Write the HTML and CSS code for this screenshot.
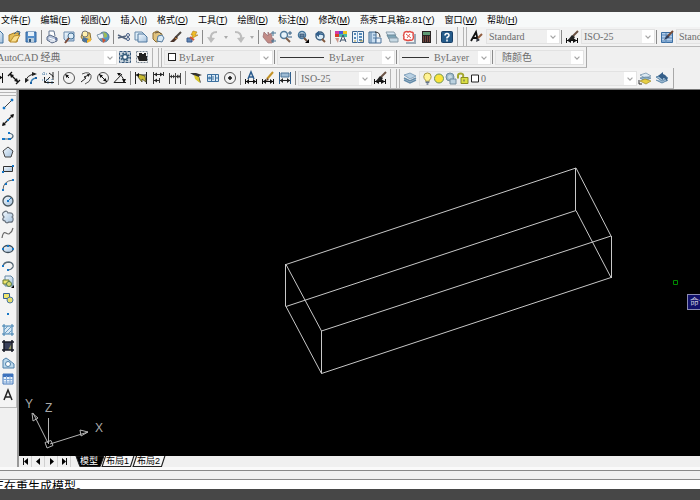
FILE: index.html
```html
<!DOCTYPE html>
<html lang="zh-CN">
<head>
<meta charset="utf-8">
<title>AutoCAD</title>
<link rel="stylesheet" href="styles.css">
</head>
<body>
<svg class="sprite" aria-hidden="true">
  <defs>
    <linearGradient id="pale" x1="0" y1="0" x2="1" y2="1"><stop offset="0" stop-color="#f4faff"/><stop offset="1" stop-color="#a3c0dc"/></linearGradient>
  </defs>
  <!-- standard toolbar -->
  <symbol id="new" viewBox="0 0 16 16"><path d="M5 2h6l3 3v9H5z" fill="url(#pale)" stroke="#42729f"/></symbol>
  <symbol id="open" viewBox="0 0 16 16"><path d="M3 6l5-2 5 0-2 9-8-1z" fill="#e3bd57" stroke="#a87b20"/><path d="M4 13l4-6 6-1-4 7z" fill="#f9df8e" stroke="#ba8b2b"/><path d="M8 5q3-4 5-2M11 2l3 1-1 3" fill="none" stroke="#366083"/></symbol>
  <symbol id="save" viewBox="0 0 16 16"><path d="M3 3h10v10H3z" fill="#568fca" stroke="#32659c"/><path d="M5 3h6v4H5z" fill="#e6f1fa"/><path d="M5 9h6v4H5z" fill="#b7cbdc"/><path d="M6 10h2v3H6z" fill="#315477"/></symbol>
  <symbol id="print" viewBox="0 0 16 16"><path d="M5 7V2h5l1 5" fill="#fff" stroke="#657692"/><path d="M3 8l3-2 7 3v3l-5 2-5-3z" fill="#b7c4da" stroke="#596985"/><path d="M5 9l6 2M6 12h5" stroke="#fff"/><circle cx="12" cy="10" r="1" fill="#586ba0"/></symbol>
  <symbol id="preview" viewBox="0 0 16 16"><path d="M3 3h10v9H5L3 10z" fill="url(#pale)" stroke="#6889ac"/><circle cx="10" cy="7" r="3" fill="#dcecf8" stroke="#467196"/><path d="M8 9l-4 5" stroke="#7b4937" stroke-width="2"/></symbol>
  <symbol id="publish" viewBox="0 0 16 16"><path d="M5 3l7 1 1 7-7 2-3-5z" fill="#e8cb73" stroke="#8e7336"/><circle cx="7" cy="5" r="3" fill="#fff0ae" stroke="#777"/><path d="M5 8l6 2-2 4-5-2z" fill="#4b729a"/><path d="M9 11l4-2v3l-4 2z" fill="#f4b72f"/></symbol>
  <symbol id="globe" viewBox="0 0 16 16"><circle cx="9" cy="8" r="5" fill="#569bc8" stroke="#547794"/><path d="M8 3q5 1 4 5l-3 1z" fill="#9dbd55"/><path d="M2 6l6-2 1 5-5 1z" fill="#edf4fb" stroke="#8399ad"/><path d="M7 9l4 2-3 3z" fill="#d5532e"/></symbol>
  <symbol id="cut" viewBox="0 0 16 16"><path d="M2 6l8 4M2 9l8-2" stroke="#54657e" stroke-width="1.5"/><circle cx="12" cy="6" r="1.5" fill="none" stroke="#425b85"/><circle cx="12" cy="10" r="1.5" fill="none" stroke="#425b85"/></symbol>
  <symbol id="copy" viewBox="0 0 16 16"><path d="M2 3h7l2 2v6H2z" fill="#dcecf7" stroke="#6688a9"/><path d="M5 5h6l3 3v5H5z" fill="url(#pale)" stroke="#50799f"/></symbol>
  <symbol id="paste" viewBox="0 0 16 16"><path d="M3 4l4-2 5 3-1 7-5 1-3-3z" fill="#e0c27d" stroke="#8b6c33"/><path d="M5 4l4-1 2 2" fill="none" stroke="#675741"/><path d="M8 7l4-1 2 3-2 4-5-1z" fill="#d8e9f6" stroke="#53799d"/></symbol>
  <symbol id="brush" viewBox="0 0 16 16"><path d="M14 3L8 9" stroke="#4d4743" stroke-width="2"/><path d="M9 7l2 2-4 4-4 0 3-3z" fill="#49332a"/><path d="M8 9l2 1" stroke="#d9964b"/></symbol>
  <symbol id="match" viewBox="0 0 16 16"><path d="M9 2l4 1-2 3h3L7 10l2-4H7z" fill="#f1bd24" stroke="#a77a21" stroke-width=".6"/><path d="M3 9h5v4H3z" fill="#6187b6" stroke="#3a5a8b"/><path d="M6 8l4 3" stroke="#d45535" stroke-width="2"/></symbol>
  <symbol id="undo" viewBox="0 0 16 16"><path d="M12 3Q5 3 6 10" fill="none" stroke="#bdbdbd" stroke-width="2"/><path d="M2 8l4 6 4-5z" fill="#bdbdbd"/></symbol>
  <symbol id="redo" viewBox="0 0 16 16"><path d="M4 3q7 0 6 7" fill="none" stroke="#bdbdbd" stroke-width="2"/><path d="M6 9l4 5 4-6z" fill="#bdbdbd"/></symbol>
  <symbol id="caret" viewBox="0 0 8 16"><path d="M2 7h4l-2 3z" fill="#aaa"/></symbol>
  <symbol id="pan" viewBox="0 0 16 16"><path d="M3 3l4 4 0-4 2 3 1-2 1 5 2 1-2 4H7L2 8z" fill="#c28b86" stroke="#966b70" stroke-width=".7"/><path d="M12 2v5M10 4h5M12 10v4M10 12h5" stroke="#447292"/></symbol>
  <symbol id="zoompm" viewBox="0 0 16 16"><circle cx="6" cy="6" r="3.5" fill="#e7f3fb" stroke="#527b9b" stroke-width="1.5"/><path d="M8 9l4 4" stroke="#80604d" stroke-width="2"/><path d="M10 4h4M12 2v4M10 8h4" stroke="#335e84"/></symbol>
  <symbol id="zoomwin" viewBox="0 0 16 16"><circle cx="7" cy="6" r="3.5" fill="#e7f3fb" stroke="#44759c" stroke-width="1.5"/><path d="M5 5h4v3H5z" fill="#6c87a4" stroke="#345777"/><path d="M9 9l3 3" stroke="#735441" stroke-width="2"/><path d="M14 10v4h-4z" fill="#000"/></symbol>
  <symbol id="zoomprev" viewBox="0 0 16 16"><circle cx="8" cy="7" r="4" fill="#d8ebf8" stroke="#3c5f7e" stroke-width="1.5"/><path d="M3 5l4-3v2q5 0 5 3-3-2-5-1v2z" fill="#315f8c"/><path d="M10 10l3 3" stroke="#82593d" stroke-width="2"/></symbol>
  <symbol id="props" viewBox="0 0 16 16"><path d="M2 2h4v3H2z" fill="#d43ba5"/><path d="M6 2h4v3H6z" fill="#4a58e0"/><path d="M10 2h4v3h-4z" fill="#f0c421"/><path d="M2 5h4v3H2z" fill="#db3e26"/><path d="M6 5h8v3H6z" fill="#49b9a4"/><path d="M7 13l3-7 3 7M8 11h5" fill="none" stroke="#3f526b"/><path d="M2 9l3 5 1-5z" fill="#cc968a"/></symbol>
  <symbol id="center" viewBox="0 0 16 16"><path d="M2.500 2.500h11v11h-11z" fill="#eef5fa" stroke="#3c648f"/><path d="M4 4h2v2H4zm0 4h2v2H4zm5-4h3v2H9zm0 3h3v2H9zm0 3h3v2H9z" fill="#568ab9"/><path d="M7.500 2v12" stroke="#79a2ca"/><path d="M4 12h2M10 12h3" stroke="#b2983d"/></symbol>
  <symbol id="palettes" viewBox="0 0 16 16"><path d="M2 3h7v11H2z" fill="#c7ddf0" stroke="#3f6890"/><path d="M4 3v11M6 6h3M6 9h3" stroke="#547ca4"/><path d="M8 3q5 0 5 5" fill="none" stroke="#333"/><path d="M9 9h5v5H9z" fill="#eaf3fa" stroke="#4a719a"/></symbol>
  <symbol id="sheets" viewBox="0 0 16 16"><path d="M2 3l8 0 2 3-8 1z" fill="#d9e8f3" stroke="#8d9eab"/><path d="M3 6l8 0 2 3-8 1z" fill="#7fa5b8" stroke="#6a8998"/><path d="M5 9h9v4H6z" fill="#c7d9e4" stroke="#879aa7"/></symbol>
  <symbol id="markup" viewBox="0 0 16 16"><path d="M5 14h9V5" fill="none" stroke="#9aa9b7" stroke-width="2"/><path d="M4 3q2-1 3 0 2-1 3 0 3 0 2 3 1 2 0 4-1 2-3 1-2 1-4 0-3 0-2-3-1-2 0-3 0-2 1-2z" fill="#fff" stroke="#e14c45" stroke-width="1.500"/><path d="M5 5l5 4M9 5L6 9" stroke="#e05a50"/></symbol>
  <symbol id="calc" viewBox="0 0 16 16"><path d="M4 2h9v12H4z" fill="#292424"/><path d="M5 3h7v3H5z" fill="#5f9a74"/><path d="M5 8h7M5 10h7M5 12h7" stroke="#c36757" stroke-dasharray="1 1"/></symbol>
  <symbol id="help" viewBox="0 0 16 16"><rect x="2.500" y="2.500" width="11" height="11" rx="1" fill="#255b8a" stroke="#183f67"/><path d="M6 6.500q0-2 2-2t2 2Q10 7.500 8 8.500v1M8 10.500v2" fill="none" stroke="#fff" stroke-width="1.500"/></symbol>
  <symbol id="textstyle" viewBox="0 0 16 16"><path d="M2 12L7 3l2 9M4 9h5" fill="none" stroke="#111" stroke-width="1.8"/><path d="M13 5L9 9" stroke="#905c3d" stroke-width="2"/><path d="M7 13l1-4 3 2z" fill="#343945"/></symbol>
  <symbol id="dimstyle" viewBox="0 0 16 16"><path d="M2.500 9v5M13.500 9v5M3 11.500h10" stroke="#111"/><path d="M3 11.500L7 9v5zM13 11.500L9 9v5z" fill="#111"/><path d="M14 2L9 7" stroke="#6b5345" stroke-width="2"/><path d="M4 11l4-5 3 2-2 3z" fill="#222"/></symbol>
  <symbol id="tablestyle" viewBox="0 0 16 16"><path d="M2.500 3.500h11v10h-11z" fill="#b5cdea" stroke="#3b6ea3"/><path d="M3 6h10M3 9h10M3 12h10M7 4v10" stroke="#5688b9"/><path d="M14 2L9 7" stroke="#764b36" stroke-width="2"/><path d="M5 11l3-5 3 2z" fill="#333e59"/></symbol>
  <!-- workspace and dimension toolbars -->
  <symbol id="gear" viewBox="0 0 16 16"><rect x="2.500" y="2.500" width="11" height="11" fill="#c8d3dc" stroke="#34577c" stroke-dasharray="3 1"/><circle cx="8" cy="8" r="2.500" fill="#fff" stroke="#365c7b" stroke-width="1.500"/><circle cx="8" cy="8" r="4" fill="none" stroke="#365c7b" stroke-width="1.500" stroke-dasharray="1.570 1.570"/></symbol>
  <symbol id="lockui" viewBox="0 0 16 16"><path d="M2.500 2.500h11v11h-11z" fill="none" stroke="#788693" stroke-dasharray="2 1"/><path d="M3 7h2V4h3v1h2V4h2v3h1v5H5z" fill="#222"/></symbol>
  <symbol id="d-linear" viewBox="0 0 16 16"><path d="M3.500 3v10M13.500 3v10M4 7.500h9" stroke="#111"/><path d="M4 7.500L7 5v5zM13.500 7.500L10 5v5z" fill="#111"/></symbol>
  <symbol id="d-aligned" viewBox="0 0 16 16"><path d="M2 6l4-4M10 14l4-4M4 4l8 8" stroke="#111" stroke-width="1.300"/><path d="M4 4l4 1-3 3zM12 12l-4-1 3-3z" fill="#111"/></symbol>
  <symbol id="d-arc" viewBox="0 0 16 16"><path d="M3 12Q3 5 12 4" fill="none" stroke="#222"/><path d="M2 13V8l4 2zM14 4l-5-2v4z" fill="#222"/><path d="M8 13q0-4 5-5" fill="none" stroke="#3d81b6" stroke-width="1.500"/><path d="M7 12h2v2H7zM12 7h2v2h-2z" fill="#1c62a5"/></symbol>
  <symbol id="d-ord" viewBox="0 0 16 16"><path d="M4.500 7v5.500H14M5 12l5-5" fill="none" stroke="#222"/><path d="M9 3l4 3v4M13 2v5" fill="none" stroke="#222"/><path d="M2 4h6M2 10h6M4 2v3M8 9v5M12 9v5" stroke="#477ca8" stroke-dasharray="1 1"/></symbol>
  <symbol id="d-rad" viewBox="0 0 16 16"><circle cx="8" cy="8" r="5.500" fill="none" stroke="#555"/><path d="M8 8L5 5" stroke="#111"/><path d="M4 4l4 1.500L5.500 8z" fill="#111"/></symbol>
  <symbol id="d-jog" viewBox="0 0 16 16"><path d="M4 4q4-2 7-1 3 2 2 5-1 4-6 6" fill="none" stroke="#555"/><path d="M3 12l5-4-2-1 5-2" fill="none" stroke="#222"/><path d="M12 4L9 4l1.500 3z" fill="#222"/></symbol>
  <symbol id="d-dia" viewBox="0 0 16 16"><circle cx="8" cy="8" r="5.500" fill="none" stroke="#555"/><path d="M4 4l8 8" stroke="#111"/><path d="M4 4l4 1.500L5.500 8zM12 12l-4-1.500L10.500 8z" fill="#111"/></symbol>
  <symbol id="d-ang" viewBox="0 0 16 16"><path d="M10 4L2 12.500h12M6 4q5 1 6 8" fill="none" stroke="#222"/><path d="M5 3l4 0-2 3zM10 9h4l-2 4z" fill="#111"/></symbol>
  <symbol id="d-quick" viewBox="0 0 16 16"><path d="M2.500 2v12M13.500 2v12M3 5h10" stroke="#222"/><path d="M5 4l7 2 1 6-4-3 0 3-4-5z" fill="#c9bb30" stroke="#4d4a22" stroke-width=".8"/><path d="M3 5l3-2v4z" fill="#111"/></symbol>
  <symbol id="d-base" viewBox="0 0 16 16"><path d="M3.500 2v12M13.500 2v4M9.500 8v5M3 4.500h10M3 10.500h6" stroke="#333"/><path d="M4 4.500l3-2v4zM13 4.500l-3-2v4zM4 10.500l3-2v4z" fill="#222"/></symbol>
  <symbol id="d-cont" viewBox="0 0 16 16"><path d="M2.500 3v11M8.500 3v11M13.500 3v11M2 6.500h12" stroke="#444"/><path d="M3 6.500l2-2v4zM13.500 6.500l-2-2v4zM8 6.500l-2-2v4zM9 6.500l2-2v4z" fill="#333"/></symbol>
  <symbol id="d-leader" viewBox="0 0 16 16"><path d="M2 3l6 0 6 2-3 1 2 7-5-4-1-3z" fill="#333"/><path d="M6 5l5 2 1 6-5-4z" fill="#d9c82e"/></symbol>
  <symbol id="d-tol" viewBox="0 0 16 16"><path d="M2.500 4.500h11v7h-11zM6.500 4v8M10.500 4v8M10 8h4" fill="#d8e8f5" stroke="#3c709f"/><circle cx="4.500" cy="8" r="1.500" fill="#4d83b1"/><path d="M7 7h2M7 9h2" stroke="#3c709f"/></symbol>
  <symbol id="d-center" viewBox="0 0 16 16"><circle cx="8" cy="8" r="5.500" fill="none" stroke="#555"/><path d="M8 6v4M6 8h4" stroke="#111" stroke-width="1.500"/></symbol>
  <symbol id="d-text" viewBox="0 0 16 16"><path d="M5 9l3-7 3 7M6 7h5" fill="none" stroke="#2c5c8d" stroke-width="1.500"/><path d="M2.500 9v5M13.500 9v5M3 11.500h10" stroke="#111"/><path d="M3 11.500L6 9v5zM13 11.500L10 9v5z" fill="#111"/></symbol>
  <symbol id="d-edit" viewBox="0 0 16 16"><path d="M2.500 9v5M13.500 9v5M3 11.500h10" stroke="#111"/><path d="M3 11.500L6 9v5zM13 11.500L10 9v5z" fill="#111"/><path d="M13 2L7 9" stroke="#c39226" stroke-width="2"/><path d="M7 8l-1 3 3-1z" fill="#60402d"/></symbol>
  <symbol id="d-update" viewBox="0 0 16 16"><path d="M2.500 2v12M13.500 2v12" stroke="#305f8d"/><path d="M4 3h8v4H4z" fill="#9ebbd4" stroke="#4d7498"/><path d="M3 10.500h10" stroke="#222"/><path d="M3 10.500L6 8v5zM13 10.500L10 8v5z" fill="#222"/></symbol>
  <!-- layers -->
  <symbol id="layers" viewBox="0 0 16 16"><path d="M2 5l6-2 6 3-6 3z" fill="#b8d0e2" stroke="#648aa9" stroke-width=".7"/><path d="M2 8l6 3 6-3M2 10l6 3 6-3" fill="none" stroke="#668dab" stroke-width="1.500"/></symbol>
  <symbol id="bulb" viewBox="1 1 13 14"><path d="M8 2q-4 0-4 4 0 2 2 4v1h4v-1q2-2 2-4 0-4-4-4z" fill="#fff394" stroke="#a29135"/><path d="M6 12h4M7 14h2" stroke="#65758b" stroke-width="1.500"/></symbol>
  <symbol id="sun" viewBox="2 2 12 12"><circle cx="8" cy="8" r="4.500" fill="#f9e33a" stroke="#6d955c"/></symbol>
  <symbol id="freeze" viewBox="2 2 12 13"><circle cx="7" cy="7" r="4" fill="#9eb9c8" stroke="#708da0"/><circle cx="7" cy="7" r="2" fill="#c6d9e2"/><path d="M7 9h6v5H7z" fill="#bbd1df" stroke="#728c9e"/></symbol>
  <symbol id="unlock" viewBox="2 2 12 12"><path d="M3 8V5q0-2 3-2t2 4" fill="none" stroke="#a5a830" stroke-width="2"/><path d="M6 7h7v6H6z" fill="#dbe044" stroke="#8b8d24"/><path d="M9 9v2" stroke="#555"/></symbol>
  <symbol id="swatch" viewBox="2 2 12 12"><path d="M4.500 4.500h7v7h-7z" fill="#fff" stroke="#222"/></symbol>
  <symbol id="lay-cur" viewBox="0 0 16 16"><path d="M3 5l6-2 5 3-6 2z" fill="#dbe9f2" stroke="#688aa5" stroke-width=".7"/><path d="M3 8l5 3 6-3-5-1z" fill="#8db0c9" stroke="#557b99" stroke-width=".7"/><path d="M3 11l5-2 6 2-5 3z" fill="#e7cf44" stroke="#a08b28" stroke-width=".7"/><path d="M2 10v4h3" fill="none" stroke="#333"/></symbol>
  <symbol id="lay-prev" viewBox="0 0 16 16"><path d="M2 7l6-2 6 3-6 3zM2 10l6 3 6-3" fill="#a5c1d7" stroke="#5d86a8"/><path d="M4 6l5-4v2q5 1 4 8-1-4-4-4v2z" fill="#355f89"/></symbol>
  <!-- draw toolbar -->
  <symbol id="line" viewBox="0 0 16 16"><path d="M4 12l8-8" stroke="#444"/><path d="M3 11h2v2H3zM11 3h2v2h-2z" fill="#1676c5" stroke="#1676c5" stroke-width=".5"/></symbol>
  <symbol id="xline" viewBox="0 0 16 16"><path d="M3 13L13 3" stroke="#222" stroke-width="1.300"/><path d="M2 14l1-4 3 3zM14 2l-4 1 3 3z" fill="#111"/><path d="M7 7h2v2H7z" fill="#1676c5"/></symbol>
  <symbol id="pline" viewBox="0 0 16 16"><path d="M3 11h7q3-1 3-3t-4-3" fill="none" stroke="#4b6679" stroke-width="1.200"/><path d="M2 10h3v2H2zM8 10h3v2H8zM8 4h2v2H8z" fill="#1676c5"/></symbol>
  <symbol id="polygon" viewBox="0 0 16 16"><path d="M8 3l5 4-2 6H5L3 7z" fill="url(#pale)" stroke="#444"/></symbol>
  <symbol id="rect" viewBox="0 0 16 16"><path d="M3.500 5.500h9v5h-9z" fill="url(#pale)" stroke="#333"/><path d="M2 10h2v2H2zM12 4h2v2h-2z" fill="#1676c5"/></symbol>
  <symbol id="arc" viewBox="0 0 16 16"><path d="M3 13q0-9 10-10" fill="none" stroke="#666"/><path d="M2 12h2v2H2zM5 6h2v2H5zM12 2h2v2h-2z" fill="#1676c5"/></symbol>
  <symbol id="circle" viewBox="0 0 16 16"><circle cx="8" cy="8" r="5" fill="url(#pale)" stroke="#47555d" stroke-width="1.300"/><path d="M8 8l3-3" stroke="#1676c5"/><path d="M7 7h2v2H7z" fill="#1676c5"/></symbol>
  <symbol id="cloud" viewBox="0 0 16 16"><path d="M4 8Q1 5 4 3q3-2 4 1 5-1 5 3-2 1 0 2 1 5-4 4-3 2-4-1Q1 11 4 8z" fill="url(#pale)" stroke="#67717c" stroke-width="1.200"/></symbol>
  <symbol id="spline" viewBox="0 0 16 16"><path d="M2 13q1-7 4-5t4 0q2-1 3-5" fill="none" stroke="#666" stroke-width="1.200"/></symbol>
  <symbol id="ellipse" viewBox="0 0 16 16"><ellipse cx="8" cy="8" rx="5" ry="3.500" fill="url(#pale)" stroke="#3e4d58" stroke-width="1.300"/><path d="M2 7h2v2H2zM12 7h2v2h-2zM7 4h2v2H7z" fill="#1676c5"/></symbol>
  <symbol id="earc" viewBox="0 0 16 16"><path d="M3 8q1-4 6-4 5 1 4 5-2 3-5 3" fill="none" stroke="#596b77" stroke-width="1.300"/><path d="M2 7h2v2H2zM7 11h2v2H7z" fill="#1676c5"/></symbol>
  <symbol id="insblock" viewBox="0 0 16 16"><path d="M5 2h6l2 2v8H5z" fill="url(#pale)" stroke="#6387a2"/><path d="M3 6h6v4H3z" fill="#eee46c" stroke="#68792f"/><circle cx="9" cy="10" r="2.500" fill="#d8d86f" stroke="#52794b"/><path d="M14 11v3h-3z" fill="#000"/></symbol>
  <symbol id="mkblock" viewBox="0 0 16 16"><path d="M3.500 3.500h6v5h-6z" fill="#eee46c" stroke="#345e90"/><circle cx="10" cy="10" r="3" fill="#e5dc6b" stroke="#49779f"/></symbol>
  <symbol id="point" viewBox="0 0 16 16"><path d="M7 7h2v2H7z" fill="#1676c5"/></symbol>
  <symbol id="hatch" viewBox="0 0 16 16"><path d="M4 4h8v8H4z" fill="#d8e8f4"/><path d="M4 2v12M12 2v12M2 4h12M2 12h12" stroke="#397cae"/><path d="M4 8l4-4M4 12l8-8M8 12l4-4" stroke="#6c9dc5"/></symbol>
  <symbol id="gradient" viewBox="0 0 16 16"><path d="M4 4h8v8H4z" fill="#39405a"/><path d="M8 12l4-7v7z" fill="#9a9864"/><path d="M4 2v12M12 2v12M2 4h12M2 12h12" stroke="#171a26" stroke-width="1.500"/></symbol>
  <symbol id="region" viewBox="0 0 16 16"><path d="M3 13V5l3-2 3 2 5 4v4z" fill="#bdd9ec" stroke="#4c7fa9"/><circle cx="8" cy="9" r="2.500" fill="#fff" stroke="#4c7fa9"/></symbol>
  <symbol id="table" viewBox="0 0 16 16"><path d="M3 3h10v10H3z" fill="#e9f2fb" stroke="#4277b8"/><path d="M3 3h10v3H3z" fill="#3d72bd"/><path d="M3 8.500h10M3 11h10M6.500 5v8M10 5v8" stroke="#81a8d6"/></symbol>
  <symbol id="mtext" viewBox="0 0 16 16"><path d="M4 13L8 3l4 10M5 10h6" fill="none" stroke="#222" stroke-width="1.500"/></symbol>
  <symbol id="chevron" viewBox="0 0 12 16"><path d="M3 7l3 3 3-3" fill="none" stroke="#a5a5a5" stroke-width="1.500"/></symbol>
</svg>

<div class="frame frame-top"></div>

<nav class="menubar">
  <button>文件(<u>F</u>)</button><button>编辑(<u>E</u>)</button><button>视图(<u>V</u>)</button><button>插入(<u>I</u>)</button><button>格式(<u>O</u>)</button><button>工具(<u>T</u>)</button><button>绘图(<u>D</u>)</button><button>标注(<u>N</u>)</button><button>修改(<u>M</u>)</button><button>燕秀工具箱2.81(<u>Y</u>)</button><button>窗口(<u>W</u>)</button><button>帮助(<u>H</u>)</button>
</nav>

<div class="dock">
  <div class="bar bar-full">
    <button class="tool first" aria-label="新建"><svg><use href="#new"/></svg></button>
    <button class="tool" aria-label="打开"><svg><use href="#open"/></svg></button>
    <button class="tool" aria-label="保存"><svg><use href="#save"/></svg></button>
    <i class="sep"></i>
    <button class="tool" aria-label="打印"><svg><use href="#print"/></svg></button>
    <button class="tool" aria-label="打印预览"><svg><use href="#preview"/></svg></button>
    <button class="tool" aria-label="发布"><svg><use href="#publish"/></svg></button>
    <button class="tool" aria-label="三维"><svg><use href="#globe"/></svg></button>
    <i class="sep"></i>
    <button class="tool" aria-label="剪切"><svg><use href="#cut"/></svg></button>
    <button class="tool" aria-label="复制"><svg><use href="#copy"/></svg></button>
    <button class="tool" aria-label="粘贴"><svg><use href="#paste"/></svg></button>
    <button class="tool" aria-label="特性匹配"><svg><use href="#brush"/></svg></button>
    <button class="tool" aria-label="块编辑器"><svg><use href="#match"/></svg></button>
    <i class="sep"></i>
    <button class="tool" aria-label="放弃"><svg><use href="#undo"/></svg></button>
    <button class="tool drop" aria-label="放弃列表"><svg><use href="#caret"/></svg></button>
    <button class="tool" aria-label="重做"><svg><use href="#redo"/></svg></button>
    <button class="tool drop" aria-label="重做列表"><svg><use href="#caret"/></svg></button>
    <i class="sep"></i>
    <button class="tool" aria-label="平移"><svg><use href="#pan"/></svg></button>
    <button class="tool" aria-label="实时缩放"><svg><use href="#zoompm"/></svg></button>
    <button class="tool" aria-label="窗口缩放"><svg><use href="#zoomwin"/></svg></button>
    <button class="tool" aria-label="缩放上一个"><svg><use href="#zoomprev"/></svg></button>
    <i class="sep"></i>
    <button class="tool" aria-label="特性"><svg><use href="#props"/></svg></button>
    <button class="tool" aria-label="设计中心"><svg><use href="#center"/></svg></button>
    <button class="tool" aria-label="工具选项板"><svg><use href="#palettes"/></svg></button>
    <button class="tool" aria-label="图纸集"><svg><use href="#sheets"/></svg></button>
    <button class="tool" aria-label="标记集"><svg><use href="#markup"/></svg></button>
    <button class="tool" aria-label="计算器"><svg><use href="#calc"/></svg></button>
    <i class="sep"></i>
    <button class="tool" aria-label="帮助"><svg><use href="#help"/></svg></button>
    <i class="grip"></i>
    <button class="tool" aria-label="文字样式"><svg><use href="#textstyle"/></svg></button>
    <label class="combo w-style"><select aria-label="文字样式"><option>Standard</option></select><svg><use href="#chevron"/></svg></label>
    <i class="sep"></i>
    <button class="tool" aria-label="标注样式"><svg><use href="#dimstyle"/></svg></button>
    <label class="combo w-style"><select aria-label="标注样式"><option>ISO-25</option></select><svg><use href="#chevron"/></svg></label>
    <i class="sep"></i>
    <button class="tool" aria-label="表格样式"><svg><use href="#tablestyle"/></svg></button>
    <label class="combo w-style"><select aria-label="表格样式"><option>Standard</option></select><svg><use href="#chevron"/></svg></label>
  </div>

  <div class="bar">
    <label class="combo w-space"><select aria-label="工作空间"><option>AutoCAD 经典</option></select><svg><use href="#chevron"/></svg></label>
    <button class="tool" aria-label="工作空间设置"><svg><use href="#gear"/></svg></button>
    <button class="tool" aria-label="我的工作空间"><svg><use href="#lockui"/></svg></button>
    <i class="grip"></i>
    <label class="combo w-color"><span class="chip"></span><select aria-label="颜色"><option>ByLayer</option></select><svg><use href="#chevron"/></svg></label>
    <i class="sep"></i>
    <label class="combo w-ltype"><span class="rule"></span><select aria-label="线型"><option>ByLayer</option></select><svg><use href="#chevron"/></svg></label>
    <i class="sep"></i>
    <label class="combo w-weight"><span class="rule rule-short"></span><select aria-label="线宽"><option>ByLayer</option></select><svg><use href="#chevron"/></svg></label>
    <i class="sep"></i>
    <label class="combo w-plot"><select aria-label="打印样式"><option>随颜色</option></select><svg><use href="#chevron"/></svg></label>
  </div>

  <div class="bar">
    <button class="tool first" aria-label="线性"><svg><use href="#d-linear"/></svg></button>
    <button class="tool" aria-label="对齐"><svg><use href="#d-aligned"/></svg></button>
    <button class="tool" aria-label="弧长"><svg><use href="#d-arc"/></svg></button>
    <button class="tool" aria-label="坐标"><svg><use href="#d-ord"/></svg></button>
    <i class="sep"></i>
    <button class="tool" aria-label="半径"><svg><use href="#d-rad"/></svg></button>
    <button class="tool" aria-label="折弯"><svg><use href="#d-jog"/></svg></button>
    <button class="tool" aria-label="直径"><svg><use href="#d-dia"/></svg></button>
    <button class="tool" aria-label="角度"><svg><use href="#d-ang"/></svg></button>
    <i class="sep"></i>
    <button class="tool" aria-label="快速标注"><svg><use href="#d-quick"/></svg></button>
    <button class="tool" aria-label="基线"><svg><use href="#d-base"/></svg></button>
    <button class="tool" aria-label="连续"><svg><use href="#d-cont"/></svg></button>
    <i class="sep"></i>
    <button class="tool" aria-label="引线"><svg><use href="#d-leader"/></svg></button>
    <button class="tool" aria-label="公差"><svg><use href="#d-tol"/></svg></button>
    <button class="tool" aria-label="圆心标记"><svg><use href="#d-center"/></svg></button>
    <i class="sep"></i>
    <button class="tool" aria-label="编辑标注"><svg><use href="#d-text"/></svg></button>
    <button class="tool" aria-label="编辑标注文字"><svg><use href="#d-edit"/></svg></button>
    <button class="tool" aria-label="标注更新"><svg><use href="#d-update"/></svg></button>
    <i class="sep"></i>
    <label class="combo w-style"><select aria-label="当前标注样式"><option>ISO-25</option></select><svg><use href="#chevron"/></svg></label>
    <button class="tool" aria-label="标注样式管理"><svg><use href="#dimstyle"/></svg></button>
    <i class="grip"></i>
    <button class="tool" aria-label="图层特性"><svg><use href="#layers"/></svg></button>
    <label class="combo w-layer"><span class="states"><svg><use href="#bulb"/></svg><svg><use href="#sun"/></svg><svg><use href="#freeze"/></svg><svg><use href="#unlock"/></svg><svg><use href="#swatch"/></svg></span><select aria-label="图层"><option>0</option></select><svg><use href="#chevron"/></svg></label>
    <button class="tool" aria-label="置为当前图层"><svg><use href="#lay-cur"/></svg></button>
    <button class="tool" aria-label="上一个图层"><svg><use href="#lay-prev"/></svg></button>
  </div>
</div>

<main class="work">
  <aside class="side">
    <div class="draw">
      <i class="grip-h"></i>
      <div class="draw-tools">
        <button class="tool" aria-label="直线"><svg><use href="#line"/></svg></button>
        <button class="tool" aria-label="构造线"><svg><use href="#xline"/></svg></button>
        <button class="tool" aria-label="多段线"><svg><use href="#pline"/></svg></button>
        <button class="tool" aria-label="正多边形"><svg><use href="#polygon"/></svg></button>
        <button class="tool" aria-label="矩形"><svg><use href="#rect"/></svg></button>
        <button class="tool" aria-label="圆弧"><svg><use href="#arc"/></svg></button>
        <button class="tool" aria-label="圆"><svg><use href="#circle"/></svg></button>
        <button class="tool" aria-label="修订云线"><svg><use href="#cloud"/></svg></button>
        <button class="tool" aria-label="样条曲线"><svg><use href="#spline"/></svg></button>
        <button class="tool" aria-label="椭圆"><svg><use href="#ellipse"/></svg></button>
        <button class="tool" aria-label="椭圆弧"><svg><use href="#earc"/></svg></button>
        <button class="tool" aria-label="插入块"><svg><use href="#insblock"/></svg></button>
        <button class="tool" aria-label="创建块"><svg><use href="#mkblock"/></svg></button>
        <button class="tool" aria-label="点"><svg><use href="#point"/></svg></button>
        <button class="tool" aria-label="图案填充"><svg><use href="#hatch"/></svg></button>
        <button class="tool" aria-label="渐变色"><svg><use href="#gradient"/></svg></button>
        <button class="tool" aria-label="面域"><svg><use href="#region"/></svg></button>
        <button class="tool" aria-label="表格"><svg><use href="#table"/></svg></button>
        <button class="tool" aria-label="多行文字"><svg><use href="#mtext"/></svg></button>
      </div>
    </div>
  </aside>
  <section class="view">
    <div class="canvas">
      <svg class="model">
        <g transform="translate(-19 -90)">
          <path class="edge" d="M286 264.500L576 168l35 68-289.500 95zM286 306.500L576 210.500l35 67L321.500 373.500zM285.500 264v42.500M575.500 168v42.500M611.500 236v42M321.500 331v42.500"/>
          <path class="axis" d="M48.500 418v26M50 444l38-12M48 443L33 413M80 430l8 2-7 4zM32 413l6 5-5 3z"/>
          <path class="axis" d="M45 442.500l6-2 2 5-6 2.500z"/>
          <path class="cursor" d="M673.500 280.500h4v4h-4z"/>
          <text class="ucs" x="25" y="408">Y</text>
          <text class="ucs" x="45" y="412">Z</text>
          <text class="ucs" x="95" y="432">X</text>
        </g>
      </svg>
      <span class="prompt">命令:</span>
    </div>
    <div class="tabs">
      <button class="nav" aria-label="第一个"><svg viewBox="0 0 13 11"><path d="M4.500 2v7" stroke="#111"/><path d="M9 2v7L5 5.500z"/></svg></button>
      <button class="nav" aria-label="上一个"><svg viewBox="0 0 13 11"><path d="M8 2v7L4 5.500z"/></svg></button>
      <button class="nav" aria-label="下一个"><svg viewBox="0 0 13 11"><path d="M5 2v7l4-3.500z"/></svg></button>
      <button class="nav" aria-label="最后一个"><svg viewBox="0 0 13 11"><path d="M4 2v7l4-3.500z"/><path d="M8.500 2v7" stroke="#111"/></svg></button>
      <button class="tab on"><svg viewBox="0 0 30 11" preserveAspectRatio="none"><path d="M1 0l4 10.500h21L30 0z"/></svg><span>模型</span></button>
      <button class="tab"><svg viewBox="0 0 30 11" preserveAspectRatio="none"><path d="M4 0L1 10.500h25L29 0"/></svg><span>布局1</span></button>
      <button class="tab"><svg viewBox="0 0 30 11" preserveAspectRatio="none"><path d="M4 0L1 10.500h25L29 0"/></svg><span>布局2</span></button>
    </div>
  </section>
</main>

<div class="splitter"></div>
<div class="command"><output>正在重生成模型。</output></div>
<div class="frame frame-bottom"></div>
</body>
</html>
```
FILE: styles.css
```css
* { box-sizing: border-box; }

body {
  margin: 0;
  height: 100vh;
  display: flex;
  flex-direction: column;
  overflow: hidden;
  background: #f0f0f0;
  color: #000;
  font: 9px/14px "Liberation Sans", "Noto Sans CJK SC", sans-serif;
}

.sprite { position: absolute; width: 0; height: 0; }

button {
  margin: 0;
  padding: 0;
  border: 0;
  background: none;
  color: inherit;
  font: inherit;
}

.frame { flex: none; background: #474747; }
.frame-top { height: 12px; }
.frame-bottom { height: 11px; }

/* menus */
.menubar {
  flex: none;
  display: flex;
  gap: 10px;
  height: 15px;
  padding-left: 1px;
  background: #f7f9f9;
  white-space: nowrap;
}
.menubar u { text-underline-offset: 1px; }

/* docked toolbars */
.dock {
  flex: none;
  display: flex;
  flex-direction: column;
  align-items: flex-start;
  border-bottom: 1px solid #777;
}
.bar {
  display: flex;
  align-items: center;
  height: 21px;
  padding-right: 2px;
  border-right: 1px solid #a8a8a8;
  border-bottom: 1px solid #b8b8b8;
  background: #f2f2f2;
  white-space: nowrap;
}
.bar-full { overflow: hidden; width: 100%; height: 20px; padding-right: 0; border-right: 0; }
.tool {
  flex: none;
  display: block;
  width: 17px;
  height: 16px;
}
.tool svg { display: block; width: 16px; height: 16px; }
.tool.first { margin-left: -11px; }
.tool.drop { width: 9px; }
.tool.drop svg { width: 8px; }
.sep {
  flex: none;
  width: 1px;
  height: 14px;
  margin: 0 2px 0 1px;
  background: #8a8a8a;
}
.grip {
  flex: none;
  width: 10px;
  height: 19px;
  margin: 0 2px 0 1px;
  border: solid #b5b5b5;
  border-width: 0 1px;
  background: linear-gradient(90deg, transparent 5px, #b5b5b5 5px, #b5b5b5 6px, transparent 6px);
}

/* drop-down lists */
.combo {
  position: relative;
  flex: none;
  display: flex;
  align-items: center;
  height: 15px;
  border: 1px solid #e2e2e2;
  background: #efefef;
}
.combo select {
  appearance: none;
  flex: 1;
  min-width: 0;
  height: 13px;
  margin: 0;
  padding: 0 0 0 2px;
  border: 0;
  background: none;
  color: #6c6c6c;
  font: 10px/13px "Liberation Serif", "Noto Sans CJK SC", serif;
}
.combo > svg { flex: none; width: 12px; height: 13px; background: #fff; }
.w-style { width: 74px; }
.w-space { width: 121px; margin-left: -4px; }
.w-space select { padding-left: 0; }
.w-color { width: 109px; }
.w-ltype { width: 118px; }
.w-weight { width: 92px; }
.w-plot { width: 89px; }
.w-plot select { padding-left: 6px; }
.w-layer { width: 218px; }
.chip { width: 8px; height: 8px; margin: 0 1px 0 3px; border: 1px solid #222; background: #fff; }
.rule { width: 44px; height: 1px; margin: 0 3px 0 2px; background: #333; }
.rule-short { width: 27px; }
.states { display: flex; padding-left: 1px; }
.states svg { width: 12px; height: 13px; }
.w-layer select { padding-left: 0; }

/* drawing area */
.work { flex: 1; min-height: 0; display: flex; }
.side { flex: none; width: 19px; border-right: 2px solid #999; }
.draw { border-right: 1px solid #bbb; border-bottom: 1px solid #bbb; background: #f4f4f4; }
.grip-h {
  display: block;
  height: 6px;
  border-bottom: 1px solid #b5b5b5;
  background: linear-gradient(transparent 2px, #b5b5b5 2px, #b5b5b5 3px, transparent 3px);
}
.draw-tools {
  display: flex;
  flex-direction: column;
  justify-content: space-between;
  height: 307px;
  margin-bottom: 4px;
}
.view { flex: 1; min-width: 0; display: flex; flex-direction: column; }
.canvas { position: relative; flex: 1; overflow: hidden; background: #000; }
.model { display: block; width: 100%; height: 100%; }
.edge { fill: none; stroke: #c8c8c8; stroke-width: 1px; }
.axis { fill: none; stroke: #b5b5b5; stroke-width: 1px; }
.cursor { fill: none; stroke: #008a00; }
.ucs { fill: #a8a8a8; font: 12px "Liberation Sans", sans-serif; }
.prompt {
  position: absolute;
  left: 668px;
  top: 204px;
  padding: 0 2px;
  border: 1px solid #8a8ab0;
  background: #10106a;
  color: #c8c8dc;
  white-space: nowrap;
}

/* layout tabs */
.tabs { flex: none; display: flex; height: 11px; line-height: 11px; }
.nav { width: 13px; height: 11px; border-right: 1px solid #d0d0d0; }
.nav svg { display: block; width: 13px; height: 11px; }
.tab { position: relative; height: 11px; padding: 0 6px 0 5px; margin-left: -3px; }
.tab svg { position: absolute; left: 0; top: 0; width: 100%; height: 11px; fill: #f7f7f7; stroke: #222; }
.tab span { position: relative; }
.nav + .tab { margin-left: 4px; }
.tab.on { color: #fff; }
.tab.on svg { fill: #000; }

/* command line */
.splitter {
  flex: none;
  height: 13px;
  border-top: 3px solid #fafafa;
  border-bottom: 1px solid #888;
  background: linear-gradient(#888 1px, #f0f0f0 1px);
}
.command {
  flex: none;
  height: 9px;
  overflow: hidden;
  background: #fff;
  font-size: 12px;
  line-height: 14px;
  white-space: nowrap;
}
.command output { display: block; margin-left: -8px; }
```
